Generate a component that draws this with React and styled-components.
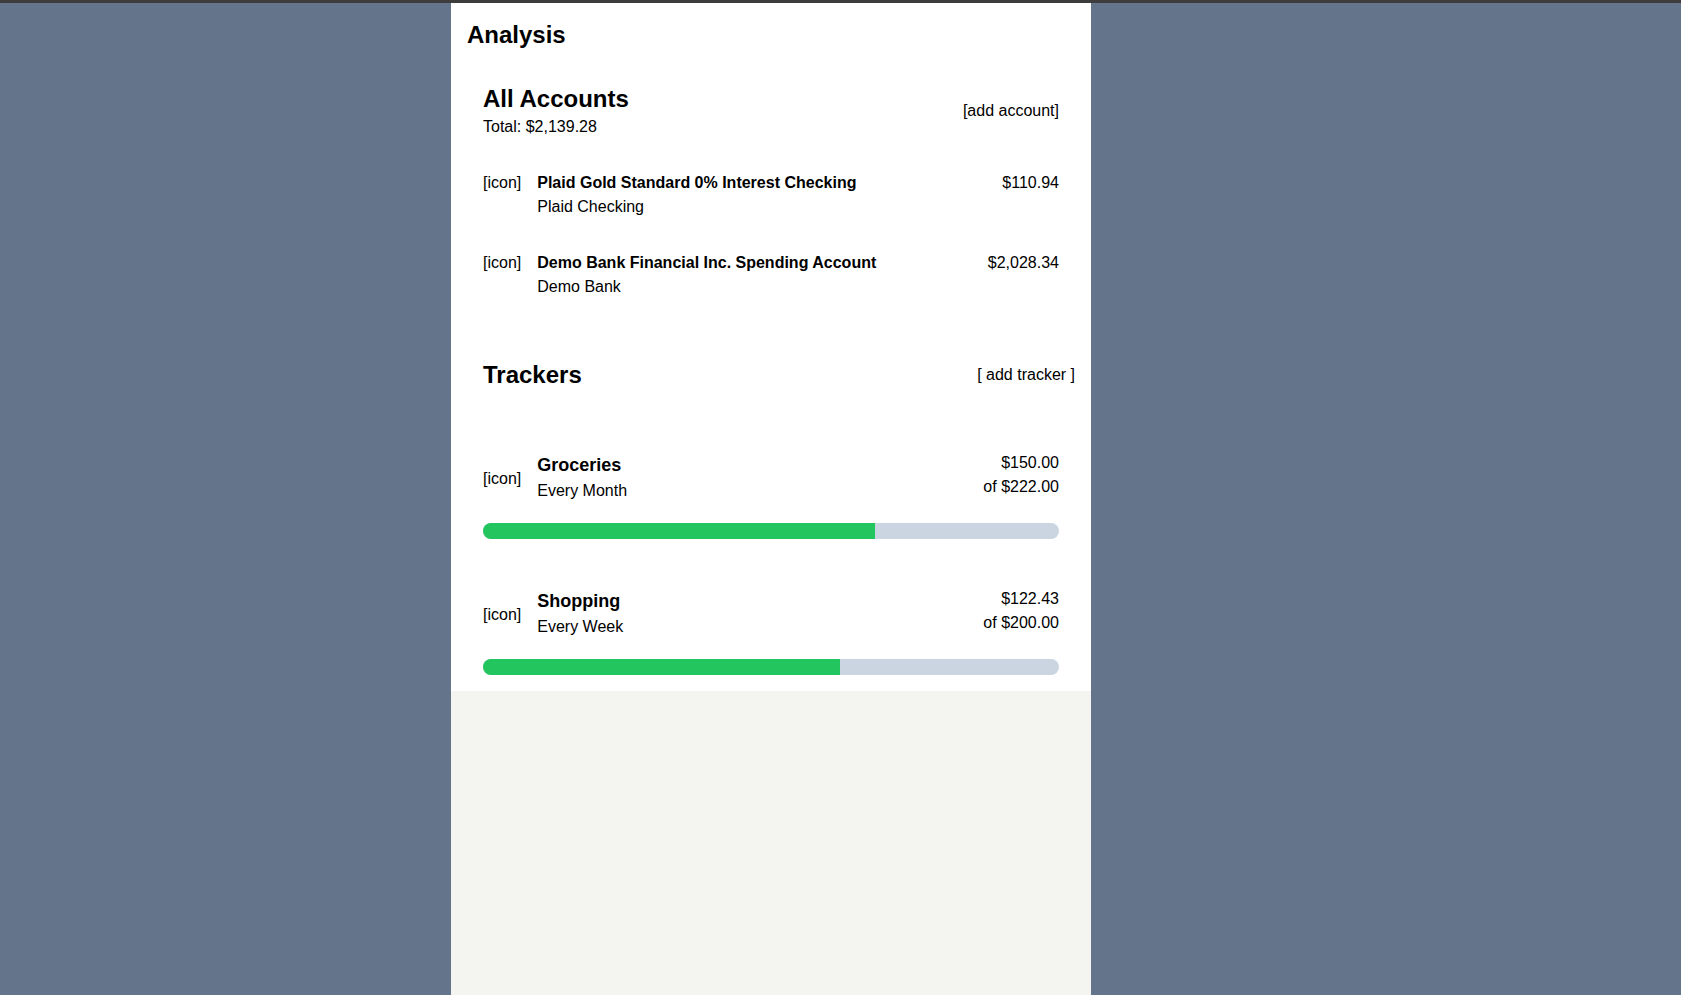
import React from 'react'
import styled, { createGlobalStyle } from 'styled-components';

const accounts = [
    { name: 'Plaid Gold Standard 0% Interest Checking', bank: 'Plaid Checking', balance: '$110.94' },
    { name: 'Demo Bank Financial Inc. Spending Account', bank: 'Demo Bank', balance: '$2,028.34' },
];

const trackers = [
    { name: 'Groceries', period: 'Every Month', spent: 150, limit: 222 },
    { name: 'Shopping', period: 'Every Week', spent: 122.43, limit: 200 },
];

const money = (n) => '$' + n.toLocaleString('en-US', { minimumFractionDigits: 2, maximumFractionDigits: 2 });

function App() {
    return (
        <>
            <GlobalStyle />
            <Page>
                <Column>
                    <Card>
                        <PageTitle>Analysis</PageTitle>

                        {/* accounts */}
                        <AccountsSection>
                            <SectionHeader>
                                <div>
                                    <SectionTitle>All Accounts</SectionTitle>
                                    <Total>Total: $2,139.28</Total>
                                </div>
                                <LinkText lift>[add account]</LinkText>
                            </SectionHeader>

                            {accounts.map(a => (
                                <AccountRow key={a.name}>
                                    <Icon>[icon]</Icon>
                                    <Info>
                                        <AccountName>{a.name}</AccountName>
                                        <SubText>{a.bank}</SubText>
                                    </Info>
                                    <Amounts>{a.balance}</Amounts>
                                </AccountRow>
                            ))}
                        </AccountsSection>

                        {/* trackers */}
                        <TrackersHeader>
                            <SectionTitle>Trackers</SectionTitle>
                            <LinkText>[ add tracker ]</LinkText>
                        </TrackersHeader>

                        <TrackerList>
                            {trackers.map(t => (
                                <Tracker key={t.name}>
                                    <TrackerRow>
                                        <Icon center>[icon]</Icon>
                                        <TrackerInfo>
                                            <TrackerName>{t.name}</TrackerName>
                                            <SubText>{t.period}</SubText>
                                        </TrackerInfo>
                                        <Amounts>
                                            <div>{money(t.spent)}</div>
                                            <div>of {money(t.limit)}</div>
                                        </Amounts>
                                    </TrackerRow>
                                    <Bar>
                                        {/* percent rounded up */}
                                        <Fill style={{ width: `${Math.ceil((t.spent / t.limit) * 100)}%` }} />
                                    </Bar>
                                </Tracker>
                            ))}
                        </TrackerList>
                    </Card>
                </Column>
            </Page>
        </>
    );
};

export default App;

const GlobalStyle = createGlobalStyle`
    body {
        margin: 0;
        background: #64748b;
        font-family: "Liberation Sans", Arial, sans-serif;
        color: #000;
    }
`

const Page = styled.div`
    min-height: 100vh;
    border-top: 3px solid #3d3d3d;
    box-sizing: border-box;
    display: flex;
`

const Column = styled.div`
    margin-left: 451px;
    width: 640px;
    background: #f4f4f1;
`

const Card = styled.div`
    background: #fff;
    padding: 18px 0 16px;
`

const PageTitle = styled.h1`
    margin: 0;
    padding-left: 16px;
    font-size: 24px;
    line-height: 28px;
    font-weight: 700;
`

const AccountsSection = styled.div`
    margin-top: 36px;
    padding: 0 32px;
`

const SectionHeader = styled.div`
    display: flex;
    justify-content: space-between;
    align-items: center;
    margin-bottom: 16px;
`

const SectionTitle = styled.h2`
    margin: 0;
    font-size: 24px;
    line-height: 28px;
    font-weight: 700;
`

const Total = styled.div`
    margin-top: 2px;
    font-size: 16px;
    line-height: 24px;
`

const LinkText = styled.div`
    font-size: 16px;
    line-height: 24px;
    cursor: pointer;
    margin-bottom: ${props => props.lift ? '2px' : '0'};
`

const AccountRow = styled.div`
    display: flex;
    align-items: flex-start;
    gap: 16px;
    padding: 16px 0;
    font-size: 16px;
    line-height: 24px;
`

const Icon = styled.div`
    font-size: 16px;
    line-height: 24px;
    align-self: ${props => props.center ? 'center' : 'flex-start'};
    margin-top: ${props => props.center ? '4px' : '0'};
`

const Info = styled.div`
    flex: 1;
`

// title sits a pixel lower than the amounts column
const TrackerInfo = styled(Info)`
    padding-top: 1px;
`

const AccountName = styled.div`
    font-weight: 700;
`

const SubText = styled.div`
    font-size: 16px;
    line-height: 24px;
`

const Amounts = styled.div`
    text-align: right;
    font-size: 16px;
    line-height: 24px;
`

const TrackersHeader = styled.div`
    display: flex;
    justify-content: space-between;
    align-items: center;
    margin-top: 46px;
    padding: 0 16px 0 32px;
`

const TrackerList = styled.div`
    margin-top: 62px;
    padding: 0 32px;
`

const Tracker = styled.div`
    & + & {
        margin-top: 48px;
    }
`

const TrackerRow = styled.div`
    display: flex;
    align-items: flex-start;
    gap: 16px;
`

const TrackerName = styled.div`
    font-size: 18px;
    line-height: 27px;
    font-weight: 700;
`

const Bar = styled.div`
    margin-top: 20px;
    height: 16px;
    border-radius: 8px;
    background: #cbd5e1;
    overflow: hidden;
`

const Fill = styled.div`
    height: 100%;
    background: #22c55e;
`
